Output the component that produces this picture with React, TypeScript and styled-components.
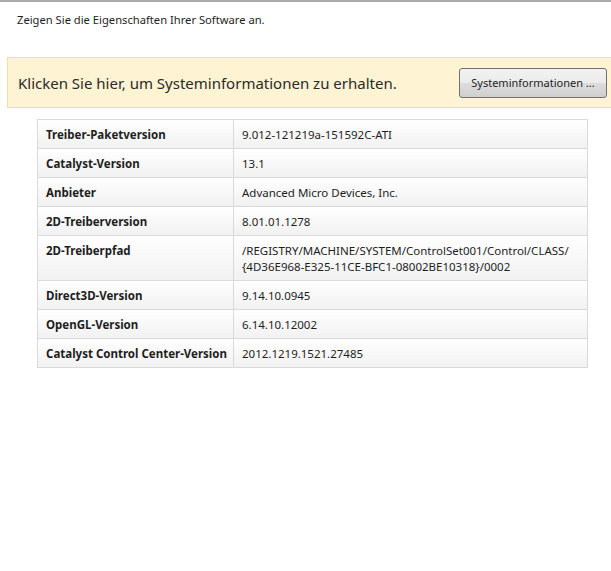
import React from 'react';
import styled, { createGlobalStyle } from 'styled-components';

const GlobalStyle = createGlobalStyle`
  html, body {
    margin: 0;
    padding: 0;
    background: #ffffff;
  }
  body {
    font-family: "Noto Sans", "Open Sans", Arial, sans-serif;
    color: #1e1e1e;
  }
`;

const Page = styled.div`
  border-top: 2px solid #a9a9a9;
  height: 569px;
  overflow: hidden;
`;

const Intro = styled.div`
  padding: 10px 0 0 17px;
  height: 45px;
  box-sizing: border-box;
  font-size: 11.2px;
  line-height: 16px;
`;

const Banner = styled.div`
  display: flex;
  align-items: center;
  justify-content: space-between;
  margin-left: 7px;
  margin-top: 10px;
  height: 51px;
  box-sizing: border-box;
  background: #fef4d3;
  border: 1px solid #f0dfa4;
  border-right: none;
  padding: 1px 4px 0 10px;
`;

const BannerText = styled.span`
  font-size: 15px;
  color: #2a2a2a;
`;

const Button = styled.button`
  width: 148px;
  height: 30px;
  margin-top: -1px;
  border: 1px solid #707070;
  border-radius: 3px;
  background: linear-gradient(#f2f2f2, #ebebeb 50%, #dddddd 51%, #cfcfcf);
  font-family: inherit;
  font-size: 11px;
  color: #1e1e1e;
  padding: 0;
`;

const Table = styled.table`
  margin: 11px 0 0 37px;
  width: 551px;
  table-layout: fixed;
  border-collapse: collapse;
  font-size: 11.5px;
`;

const Row = styled.tr`
  background: linear-gradient(#ffffff, #f1f1f1);
`;

const Cell = styled.td<{ $bold?: boolean }>`
  border: 1px solid #dadada;
  padding: 7px 8px 5px 8px;
  font-weight: ${(p) => (p.$bold ? 'bold' : 'normal')};
  line-height: 16px;
  vertical-align: top;
  white-space: nowrap;
`;

const rows: [string, React.ReactNode][] = [
  ['Treiber-Paketversion', '9.012-121219a-151592C-ATI'],
  ['Catalyst-Version', '13.1'],
  ['Anbieter', 'Advanced Micro Devices, Inc.'],
  ['2D-Treiberversion', '8.01.01.1278'],
  [
    '2D-Treiberpfad',
    <>
      /REGISTRY/MACHINE/SYSTEM/ControlSet001/Control/CLASS/
      <br />
      {'{4D36E968-E325-11CE-BFC1-08002BE10318}/0002'}
    </>,
  ],
  ['Direct3D-Version', '9.14.10.0945'],
  ['OpenGL-Version', '6.14.10.12002'],
  ['Catalyst Control Center-Version', '2012.1219.1521.27485'],
];

const App: React.FC = () => (
  <Page>
    <GlobalStyle />
    <Intro>Zeigen Sie die Eigenschaften Ihrer Software an.</Intro>
    <Banner>
      <BannerText>Klicken Sie hier, um Systeminformationen zu erhalten.</BannerText>
      <Button>Systeminformationen ...</Button>
    </Banner>
    <Table>
      <colgroup>
        <col style={{ width: 196 }} />
        <col />
      </colgroup>
      <tbody>
        {rows.map(([label, value]) => (
          <Row key={label}>
            <Cell $bold>{label}</Cell>
            <Cell>{value}</Cell>
          </Row>
        ))}
      </tbody>
    </Table>
  </Page>
);

export default App;
